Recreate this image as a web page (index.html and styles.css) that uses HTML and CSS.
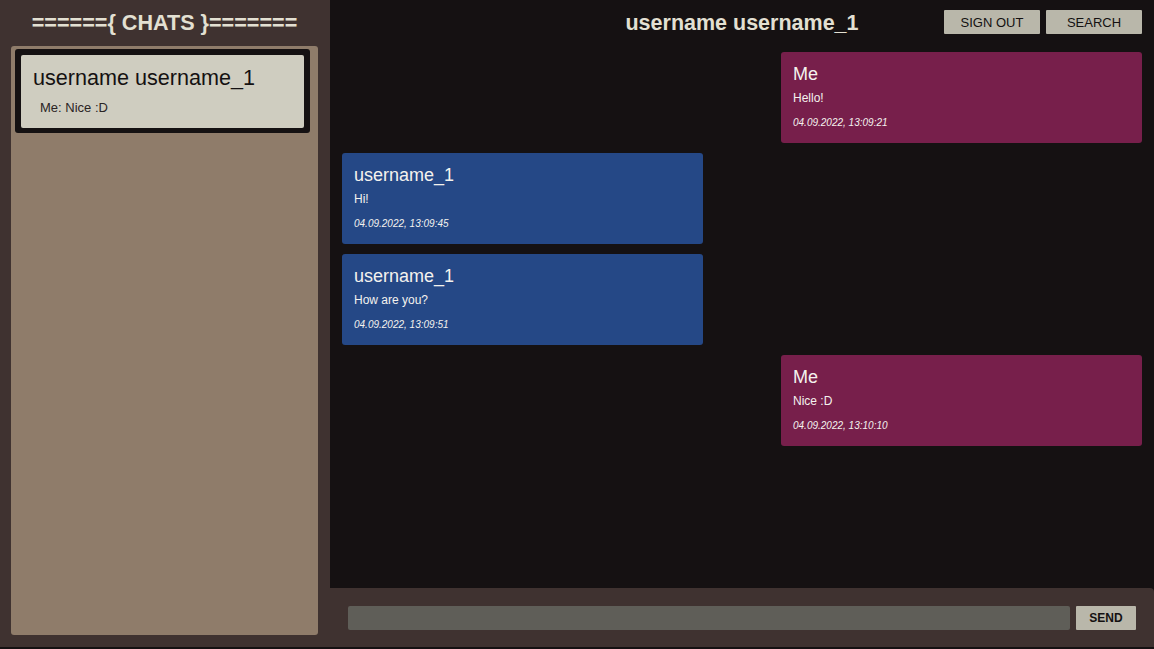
FILE: index.html
```html
<!DOCTYPE html>
<html>
<head>
<meta charset="utf-8">
<link rel="stylesheet" href="styles.css">
</head>
<body>
<div class="app">
  <aside class="sidebar">
    <h1 class="side-title">======{ CHATS }=======</h1>
    <div class="chat-list">
      <div class="chat-item">
        <div class="chat-item-inner">
          <div class="chat-name">username username_1</div>
          <div class="chat-last">Me: Nice :D</div>
        </div>
      </div>
    </div>
  </aside>
  <main class="main">
    <header class="header">
      <div></div>
      <h2 class="header-title">username username_1</h2>
      <div class="header-actions">
        <button class="btn">SIGN OUT</button>
        <button class="btn">SEARCH</button>
      </div>
    </header>
    <section class="messages">
      <div class="msg mine">
        <div class="msg-name">Me</div>
        <div class="msg-text">Hello!</div>
        <div class="msg-date">04.09.2022, 13:09:21</div>
      </div>
      <div class="msg theirs">
        <div class="msg-name">username_1</div>
        <div class="msg-text">Hi!</div>
        <div class="msg-date">04.09.2022, 13:09:45</div>
      </div>
      <div class="msg theirs">
        <div class="msg-name">username_1</div>
        <div class="msg-text">How are you?</div>
        <div class="msg-date">04.09.2022, 13:09:51</div>
      </div>
      <div class="msg mine">
        <div class="msg-name">Me</div>
        <div class="msg-text">Nice :D</div>
        <div class="msg-date">04.09.2022, 13:10:10</div>
      </div>
    </section>
    <footer class="composer">
      <input class="composer-input" type="text">
      <button class="btn send">SEND</button>
    </footer>
  </main>
</div>
</body>
</html>
```
FILE: styles.css
```css
* { box-sizing: border-box; }
html, body { margin: 0; padding: 0; }
body {
  background: #151112;
  font-family: "Liberation Sans", Arial, sans-serif;
  height: 649px;
  overflow: hidden;
}
.app {
  display: flex;
  height: 647px;
}
.sidebar {
  width: 330px;
  background: #3f3230;
  display: flex;
  flex-direction: column;
  padding: 0 12px 12px 11px;
}
.side-title {
  margin: 0;
  height: 46px;
  line-height: 46px;
  text-align: center;
  font-size: 21.6px;
  font-weight: bold;
  color: #e3e0d2;
}
.chat-list {
  flex: 1;
  background: #8f7c6a;
  border-radius: 3px;
  padding: 3px 8px 0 4px;
}
.chat-item {
  background: #151112;
  border-radius: 3px;
  padding: 6px 6px 5px 6px;
}
.chat-item-inner {
  background: #cfcdc0;
  border-radius: 2px;
  height: 73px;
  padding: 10px 12px 0 12px;
  color: #141111;
}
.chat-name {
  font-size: 21.6px;
  line-height: 26px;
}
.chat-last {
  font-size: 13px;
  line-height: 16px;
  margin-top: 9px;
  padding-left: 7px;
  color: #2a2424;
}
.main {
  flex: 1;
  display: flex;
  flex-direction: column;
  background: #151112;
}
.header {
  display: grid;
  grid-template-columns: 1fr auto 1fr;
  align-items: start;
  height: 42px;
  padding: 0 12px;
}
.header-title {
  margin: 0;
  font-size: 21.5px;
  font-weight: bold;
  color: #e3e0d2;
  line-height: 46px;
}
.header-actions {
  display: flex;
  justify-content: flex-end;
  gap: 6px;
  padding-top: 10px;
}
.btn {
  background: #b9b7aa;
  border: none;
  border-radius: 1px;
  width: 96px;
  height: 24px;
  font-family: "Liberation Sans", Arial, sans-serif;
  font-size: 13px;
  color: #141111;
  padding: 0;
}
.messages {
  flex: 1;
  display: flex;
  flex-direction: column;
  gap: 10px;
  padding: 10px 12px;
}
.msg {
  width: 361px;
  border-radius: 3px;
  padding: 12px 12px 13px 12px;
  color: #f4f2ee;
}
.mine {
  align-self: flex-end;
  background: #771f4b;
}
.theirs {
  align-self: flex-start;
  background: #254886;
}
.msg-name {
  font-size: 18px;
  line-height: 21px;
}
.msg-text {
  font-size: 12px;
  line-height: 14px;
  margin-top: 6px;
}
.msg-date {
  font-size: 10px;
  line-height: 14px;
  font-style: italic;
  margin-top: 11px;
}
.composer {
  height: 59px;
  background: #3f3230;
  border-top-right-radius: 4px;
  display: flex;
  align-items: flex-start;
  gap: 6px;
  padding: 18px 18px 0 18px;
}
.composer-input {
  flex: 1;
  height: 24px;
  background: #5f5e58;
  border: none;
  border-radius: 2px;
  outline: none;
}
.send {
  width: 60px;
  font-weight: bold;
  font-size: 12px;
}
```
